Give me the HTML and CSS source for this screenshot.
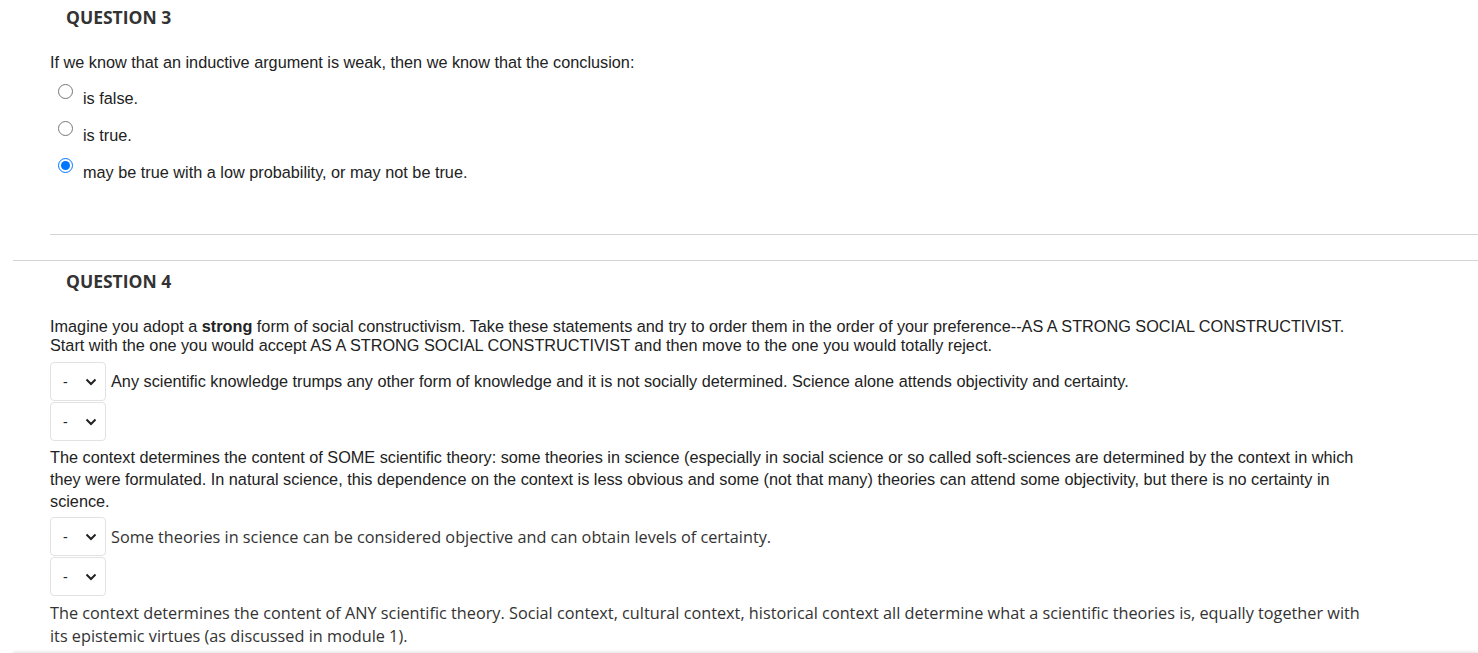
FILE: index.html
```html
<!DOCTYPE html>
<html lang="en">
  <head>
    <meta charset="UTF-8" />
    <title>Test</title>
    <link rel="stylesheet" href="styles.css">
  </head>
  <body>
    <div class="question-block first">
      <h3 class="steptitle">QUESTION 3</h3>
      <div class="field">
        <p class="question-text">If we know that an inductive argument is weak, then we know that the conclusion:</p>
        <div class="choices">
          <label class="choice">
            <input type="radio" name="q3">
            <span>is false.</span>
          </label>
          <label class="choice">
            <input type="radio" name="q3">
            <span>is true.</span>
          </label>
          <label class="choice">
            <input type="radio" name="q3" checked>
            <span>may be true with a low probability, or may not be true.</span>
          </label>
        </div>
      </div>
    </div>

    <div class="question-block">
      <h3 class="steptitle">QUESTION 4</h3>
      <div class="field">
        <p class="question-text">Imagine you adopt a <strong>strong</strong> form of social constructivism. Take these statements and try to order them in the order of your preference--AS A STRONG SOCIAL CONSTRUCTIVIST.<br>Start with the one you would accept AS A STRONG SOCIAL CONSTRUCTIVIST and then move to the one you would totally reject.</p>

        <div class="order-row">
          <span class="select-wrap">
            <select><option>-</option><option>1</option><option>2</option><option>3</option><option>4</option></select>
            <svg viewBox="0 0 12 8" width="12" height="8"><path d="M1.5 1.5 L6 6 L10.5 1.5" fill="none" stroke="#222" stroke-width="2"/></svg>
          </span>
          <span class="order-label">Any scientific knowledge trumps any other form of knowledge and it is not socially determined. Science alone attends objectivity and certainty.</span>
        </div>

        <div class="order-row">
          <span class="select-wrap">
            <select><option>-</option><option>1</option><option>2</option><option>3</option><option>4</option></select>
            <svg viewBox="0 0 12 8" width="12" height="8"><path d="M1.5 1.5 L6 6 L10.5 1.5" fill="none" stroke="#222" stroke-width="2"/></svg>
          </span>
        </div>
        <p class="order-para">The context determines the content of SOME scientific theory: some theories in science (especially in social science or so called soft-sciences are determined by the context in which they were formulated. In natural science, this dependence on the context is less obvious and some (not that many) theories can attend some objectivity, but there is no certainty in science.</p>

        <div class="order-row">
          <span class="select-wrap">
            <select><option>-</option><option>1</option><option>2</option><option>3</option><option>4</option></select>
            <svg viewBox="0 0 12 8" width="12" height="8"><path d="M1.5 1.5 L6 6 L10.5 1.5" fill="none" stroke="#222" stroke-width="2"/></svg>
          </span>
          <span class="order-label sans">Some theories in science can be considered objective and can obtain levels of certainty.</span>
        </div>

        <div class="order-row">
          <span class="select-wrap">
            <select><option>-</option><option>1</option><option>2</option><option>3</option><option>4</option></select>
            <svg viewBox="0 0 12 8" width="12" height="8"><path d="M1.5 1.5 L6 6 L10.5 1.5" fill="none" stroke="#222" stroke-width="2"/></svg>
          </span>
        </div>
        <p class="order-para sans last">The context determines the content of ANY scientific theory. Social context, cultural context, historical context all determine what a scientific theories is, equally together with its epistemic virtues (as discussed in module 1).</p>
      </div>
    </div>
    <div class="page-end"></div>
  </body>
</html>
```

FILE: styles.css
```css
body {
  font-family: "Liberation Sans", Arial, sans-serif;
  margin: 0;
  padding: 0;
  background: #fff;
  color: #222;
}

.question-block {
  margin-left: 13px;
  border-top: 1px solid #d4d4d4;
  padding-top: 8px;
}

.question-block.first {
  border-top: none;
  padding-top: 5px;
}

.steptitle {
  font-family: "Open Sans", sans-serif;
  font-weight: 700;
  font-size: 17.5px;
  color: #333;
  margin: 0 0 0 53px;
  line-height: 24px;
}

.field {
  margin-left: 37px;
}

.first .field {
  border-bottom: 1px solid #d4d4d4;
  padding-bottom: 42px;
  margin-bottom: 25px;
}

.question-text {
  font-size: 16.25px;
  line-height: 19px;
  margin: 24px 0 0;
  max-width: 1320px;
}

.choice {
  display: flex;
  align-items: flex-start;
  height: 37px;
  font-size: 16.25px;
}

.choice input {
  width: 15px;
  height: 15px;
  margin: 3px 0 0 8px;
}

.choice span {
  margin: 8px 0 0 10px;
}

.first .choices {
  margin-top: 9px;
}

.order-row {
  display: flex;
  align-items: center;
  margin-top: 1px;
}

.question-text + .order-row {
  margin-top: 7px;
}

.select-wrap {
  position: relative;
  display: inline-block;
}

.select-wrap select {
  appearance: none;
  width: 56px;
  height: 39px;
  border: 1px solid #e2e2e2;
  border-radius: 4px;
  background: #fff;
  font-family: "Liberation Sans", Arial, sans-serif;
  font-size: 14px;
  color: #222;
  padding: 0 0 0 12px;
}

.select-wrap svg {
  position: absolute;
  right: 9px;
  top: 16px;
  pointer-events: none;
}

.order-label {
  font-size: 16.25px;
  margin-left: 5px;
}

.order-para {
  font-size: 16.25px;
  line-height: 22px;
  margin: 5px 0 5px;
  max-width: 1320px;
}

.sans {
  font-family: "Open Sans", sans-serif;
  font-size: 16.25px;
  color: #333;
}

.order-para.sans {
  line-height: 23px;
  margin-top: 6px;
}

.order-para.last {
  margin-bottom: 6px;
}

.page-end {
  margin-left: 13px;
  border-top: 1px solid #ccc;
  box-shadow: 0 -2px 3px rgba(0, 0, 0, 0.12);
  height: 20px;
}
```
